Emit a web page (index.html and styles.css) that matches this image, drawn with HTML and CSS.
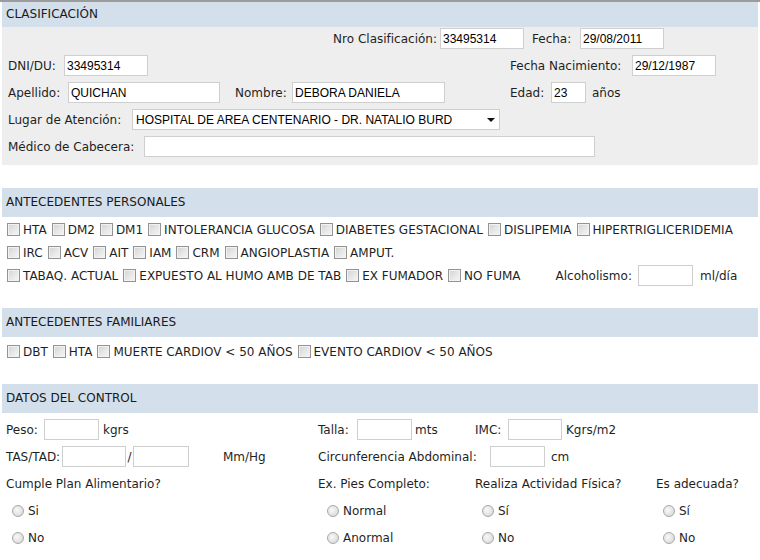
FILE: index.html
```html
<!DOCTYPE html>
<html lang="es">
<head>
<meta charset="utf-8">
<title>Clasificación</title>
<link rel="stylesheet" href="styles.css">
</head>
<body>
<div class="frame">
<div class="page">
  <section class="sec-clas">
    <div class="hdr first">CLASIFICACIÓN</div>
    <div class="panel">
      <div class="row">
        <span class="lab lab-nro">Nro Clasificación:</span>
        <input class="in w84" value="33495314">
        <span class="lab lab-fecha">Fecha:</span>
        <input class="in w84" value="29/08/2011">
      </div>
      <div class="row">
        <div class="left">
          <span class="lab lab-dni">DNI/DU:</span>
          <input class="in w84" value="33495314">
        </div>
        <span class="lab lab-fnac">Fecha Nacimiento:</span>
        <input class="in w84" value="29/12/1987">
      </div>
      <div class="row">
        <div class="left">
          <span class="lab lab-ape">Apellido:</span>
          <input class="in w152" value="QUICHAN">
          <span class="lab lab-nom">Nombre:</span>
          <input class="in w153" value="DEBORA DANIELA">
        </div>
        <span class="lab lab-edad">Edad:</span>
        <input class="in w35" value="23">
        <span class="unit-anos">años</span>
      </div>
      <div class="row">
        <span class="lab lab-lugar">Lugar de Atención:</span>
        <span class="sel"><select><option>HOSPITAL DE AREA CENTENARIO - DR. NATALIO BURD</option></select></span>
      </div>
      <div class="row">
        <span class="lab lab-med">Médico de Cabecera:</span>
        <input class="in w451" value="">
      </div>
    </div>
  </section>

  <section class="sec">
    <div class="hdr">ANTECEDENTES PERSONALES</div>
    <div class="body-chk">
      <div class="crow">
        <label class="chk"><input type="checkbox">HTA</label>
        <label class="chk"><input type="checkbox">DM2</label>
        <label class="chk"><input type="checkbox">DM1</label>
        <label class="chk"><input type="checkbox">INTOLERANCIA GLUCOSA</label>
        <label class="chk"><input type="checkbox">DIABETES GESTACIONAL</label>
        <label class="chk"><input type="checkbox">DISLIPEMIA</label>
        <label class="chk"><input type="checkbox">HIPERTRIGLICERIDEMIA</label>
      </div>
      <div class="crow">
        <label class="chk"><input type="checkbox">IRC</label>
        <label class="chk"><input type="checkbox">ACV</label>
        <label class="chk"><input type="checkbox">AIT</label>
        <label class="chk"><input type="checkbox">IAM</label>
        <label class="chk"><input type="checkbox">CRM</label>
        <label class="chk"><input type="checkbox">ANGIOPLASTIA</label>
        <label class="chk"><input type="checkbox">AMPUT.</label>
      </div>
      <div class="crow">
        <label class="chk"><input type="checkbox">TABAQ. ACTUAL</label>
        <label class="chk"><input type="checkbox">EXPUESTO AL HUMO AMB DE TAB</label>
        <label class="chk"><input type="checkbox">EX FUMADOR</label>
        <label class="chk"><input type="checkbox">NO FUMA</label>
        <span class="alc">Alcoholismo:</span>
        <input class="in w55" value="">
        <span class="unit-ml">ml/día</span>
      </div>
    </div>
  </section>

  <section class="sec">
    <div class="hdr">ANTECEDENTES FAMILIARES</div>
    <div class="body-chk fam">
      <div class="crow">
        <label class="chk"><input type="checkbox">DBT</label>
        <label class="chk"><input type="checkbox">HTA</label>
        <label class="chk"><input type="checkbox">MUERTE CARDIOV &lt; 50 AÑOS</label>
        <label class="chk"><input type="checkbox">EVENTO CARDIOV &lt; 50 AÑOS</label>
      </div>
    </div>
  </section>

  <section class="sec">
    <div class="hdr">DATOS DEL CONTROL</div>
    <div class="grid">
      <div class="cell"><span class="lab w-peso">Peso:</span><input class="in w55" value=""><span class="u4">kgrs</span></div>
      <div class="cell"><span class="lab w-talla">Talla:</span><input class="in w55" value=""><span class="u3">mts</span></div>
      <div class="cell"><span class="lab w-imc">IMC:</span><input class="in w54" value=""><span class="u4">Kgrs/m2</span></div>
      <div class="cell"></div>

      <div class="cell"><span class="lab w-tas">TAS/TAD:</span><input class="in w64" value=""><span class="slash">/</span><input class="in w56" value=""><span class="u-mm">Mm/Hg</span></div>
      <div class="cell span2"><span class="lab w-circ">Circunferencia Abdominal:</span><input class="in w55" value=""><span class="u6">cm</span></div>
      <div class="cell"></div>

      <div class="cell">Cumple Plan Alimentario?</div>
      <div class="cell">Ex. Pies Completo:</div>
      <div class="cell">Realiza Actividad Física?</div>
      <div class="cell">Es adecuada?</div>

      <div class="cell"><label class="rad r6"><input type="radio" name="plan">Si</label></div>
      <div class="cell"><label class="rad r9"><input type="radio" name="pies">Normal</label></div>
      <div class="cell"><label class="rad r7"><input type="radio" name="act">Sí</label></div>
      <div class="cell"><label class="rad r7"><input type="radio" name="adec">Sí</label></div>

      <div class="cell"><label class="rad r6"><input type="radio" name="plan">No</label></div>
      <div class="cell"><label class="rad r9"><input type="radio" name="pies">Anormal</label></div>
      <div class="cell"><label class="rad r7"><input type="radio" name="act">No</label></div>
      <div class="cell"><label class="rad r7"><input type="radio" name="adec">No</label></div>
    </div>
  </section>
</div>
</div>
</body>
</html>
```

FILE: styles.css
```css
* { box-sizing: border-box; }

body {
  margin: 0;
  background: #ffffff;
  font-family: "DejaVu Sans", Verdana, sans-serif;
  font-size: 12px;
  color: #1f1f1f;
}

.frame {
  border-top: 2px solid #9c9c9c;
}

.page {
  width: 756px;
  margin-left: 2px;
}

.hdr {
  height: 29px;
  line-height: 29px;
  background: #d4dfec;
  padding-left: 4px;
  color: #1a1a1a;
}

.hdr.first {
  height: 25px;
  line-height: 25px;
}

/* Clasificación panel */
.panel {
  background: #eeeeee;
  padding: 1px 0 8px 6px;
  display: flex;
  flex-direction: column;
  gap: 6px;
}

.row {
  display: flex;
  align-items: center;
  height: 21px;
}

.left {
  display: flex;
  align-items: center;
  width: 502px;
}

.lab { display: inline-block; white-space: nowrap; }

.lab-nro { width: 429px; text-align: right; margin-right: 3px; }
.lab-fecha { width: 48px; margin-left: 8px; }
.lab-dni { width: 56px; }
.lab-fnac { width: 122px; }
.lab-ape { width: 60px; }
.lab-nom { width: 57px; margin-left: 15px; }
.lab-edad { width: 41px; }
.lab-lugar { width: 124px; }
.lab-med { width: 136px; }
.unit-anos { margin-left: 6px; }

.in {
  height: 21px;
  border: 1px solid #cfcfcf;
  background: #ffffff;
  font-family: "Liberation Sans", Arial, sans-serif;
  font-size: 12px;
  color: #000;
  padding: 0 2px;
  margin: 0;
  outline: none;
}

.w35 { width: 35px; }
.w54 { width: 54px; }
.w55 { width: 55px; }
.w56 { width: 56px; }
.w64 { width: 64px; }
.w84 { width: 84px; }
.w152 { width: 152px; }
.w153 { width: 153px; }
.w451 { width: 451px; }

.sel {
  position: relative;
  display: inline-block;
  width: 368px;
  height: 21px;
}

.sel select {
  -webkit-appearance: none;
  appearance: none;
  width: 100%;
  height: 21px;
  border: 1px solid #cfcfcf;
  background: #ffffff;
  font-family: "Liberation Sans", Arial, sans-serif;
  font-size: 12px;
  color: #000;
  padding: 0 0 0 3px;
  margin: 0;
  border-radius: 0;
  outline: none;
}

.sel::after {
  content: "";
  position: absolute;
  right: 5px;
  top: 9px;
  border-left: 4px solid transparent;
  border-right: 4px solid transparent;
  border-top: 4px solid #111;
}

/* Sections */
.sec { margin-top: 23px; }
.sec + .sec { margin-top: 21px; }

.body-chk {
  padding: 1px 0 0 5px;
}
.body-chk.fam { padding-top: 3px; }

.crow {
  display: flex;
  align-items: center;
  height: 23px;
  gap: 5px;
  white-space: nowrap;
}

.chk {
  display: inline-flex;
  align-items: center;
}

.chk input {
  -webkit-appearance: none;
  appearance: none;
  width: 13px;
  height: 13px;
  margin: 0 3px 0 0;
  border: 1px solid #939393;
  background: linear-gradient(135deg, #d2d2d2 0%, #e6e6e6 50%, #f6f6f6 100%);
  box-shadow: inset 0 0 0 1px #f2f2f2;
}

.alc { margin-left: 30px; margin-right: 1px; }
.unit-ml { margin-left: 2px; }

/* Datos del control */
.grid {
  display: grid;
  grid-template-columns: 312px 157px 181px 1fr;
  grid-auto-rows: 27px;
  padding: 3px 0 0 4px;
}

.cell {
  display: flex;
  align-items: center;
  white-space: nowrap;
}

.span2 { grid-column: span 2; }

.w-peso { width: 38px; }
.w-talla { width: 39px; }
.w-imc { width: 33px; }
.w-tas { width: 56px; }
.w-circ { width: 172px; }

.u3 { margin-left: 3px; }
.u4 { margin-left: 4px; }
.u6 { margin-left: 6px; }
.u-mm { margin-left: 34px; }
.slash { width: 7px; text-align: center; }

.rad {
  display: inline-flex;
  align-items: center;
}
.r6 { margin-left: 6px; }
.r7 { margin-left: 7px; }
.r9 { margin-left: 9px; }

.rad input {
  -webkit-appearance: none;
  appearance: none;
  width: 12px;
  height: 12px;
  margin: 0 4px 0 0;
  border-radius: 50%;
  border: 1px solid #a8a8a8;
  background: radial-gradient(circle at 40% 40%, #f8f8f8 0%, #e2e2e2 60%, #cfcfcf 100%);
}
```
